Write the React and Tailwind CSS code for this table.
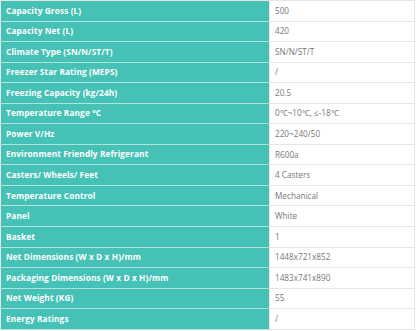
import React from 'react';

const specs = [
  ['Capacity Gross (L)', '500'],
  ['Capacity Net (L)', '420'],
  ['Climate Type (SN/N/ST/T)', 'SN/N/ST/T'],
  ['Freezer Star Rating (MEPS)', '/'],
  ['Freezing Capacity (kg/24h)', '20.5'],
  ['Temperature Range °C', '0℃~10℃, ≤-18℃'],
  ['Power V/Hz', '220~240/50'],
  ['Environment Friendly Refrigerant', 'R600a'],
  ['Casters/ Wheels/ Feet', '4 Casters'],
  ['Temperature Control', 'Mechanical'],
  ['Panel', 'White'],
  ['Basket', '1'],
  ['Net Dimensions (W x D x H)/mm', '1448x721x852'],
  ['Packaging Dimensions (W x D x H)/mm', '1483x741x890'],
  ['Net Weight (KG)', '55'],
  ['Energy Ratings', '/'],
];

export default function App() {
  return (
    <div className="w-[416px] h-[331px] bg-white overflow-hidden" style={{ fontFamily: '"Open Sans", "Liberation Sans", sans-serif' }}>
      <table className="w-[415px] border-collapse">
        <tbody>
          {specs.map(([label, value]) => (
            <tr key={label} className="h-[20.55px]">
              <td className="w-[269px] bg-[#45c1b6] border border-[#e6e6e6] border-b-[#b0e3dd] pl-[5px] text-[8.3px] font-bold text-white leading-none tracking-[0.1px]">
                {label}
              </td>
              <td className="bg-white border border-[#e6e6e6] pl-[5px] text-[8.2px] text-[#777777] leading-none">
                {value}
              </td>
            </tr>
          ))}
        </tbody>
      </table>
    </div>
  );
}
